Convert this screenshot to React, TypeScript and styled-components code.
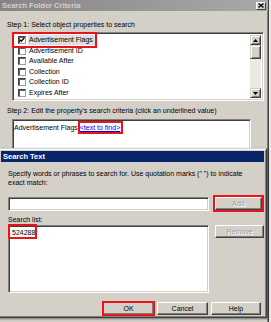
import React from 'react';
import styled, { createGlobalStyle, css } from 'styled-components';

const Global = createGlobalStyle`
  html, body { margin: 0; padding: 0; background: #ececec; }
  body { font-family: "Liberation Sans", Arial, sans-serif; }
`;

const Desktop = styled.div`
  position: relative;
  width: 271px;
  height: 322px;
  overflow: hidden;
  background: #e9e9e9;
  font-family: "Liberation Sans", Arial, sans-serif;
  font-size: 7px;
  line-height: 9px;
  color: #000;
`;

const MainWindow = styled.div`
  width: 269px;
  height: 360px;
  box-sizing: border-box;
  background: #d4d0c8;
  border-right: 1px solid #404040;
  box-shadow: inset -1px 0 0 #808080;
  display: flex;
  flex-direction: column;
`;

const TitleBar = styled.div<{ $active?: boolean; $size: number }>`
  height: 11px;
  flex: none;
  display: flex;
  align-items: center;
  justify-content: space-between;
  padding: 0 2px 0 2px;
  font-weight: bold;
  font-size: ${p => p.$size}px;
  white-space: nowrap;
  ${p =>
    p.$active
      ? css`
          background: #0a246a;
          color: #fff;
        `
      : css`
          background: linear-gradient(90deg, #858585, #a9a9a9);
          color: #d4d0c8;
        `}
`;

const CloseBtn = styled.div`
  width: 10px;
  height: 8px;
  box-sizing: border-box;
  background: #d4d0c8;
  border: 1px solid;
  border-color: #fff #404040 #404040 #fff;
  display: flex;
  align-items: center;
  justify-content: center;
`;

const Label = styled.div<{ $top: number; $left?: number }>`
  margin-top: ${p => p.$top}px;
  margin-left: ${p => p.$left ?? 7}px;
  white-space: nowrap;
  height: 9px;
`;

const Sunken = css`
  box-sizing: border-box;
  background: #fff;
  border: 1px solid;
  border-color: #808080 #fff #fff #808080;
  box-shadow: inset 1px 1px 0 #404040, inset -1px -1px 0 #d4d0c8;
`;

const PropList = styled.div`
  ${Sunken};
  margin: 3px 0 0 12px;
  width: 252px;
  height: 69px;
  display: flex;
  padding: 2px;
`;

const Rows = styled.div`
  flex: 1;
  display: flex;
  flex-direction: column;
`;

const Row = styled.div`
  height: 11px;
  display: flex;
  align-items: center;
  padding-left: 3px;
  white-space: nowrap;
`;

const Check = styled.span`
  width: 8px;
  height: 8px;
  box-sizing: border-box;
  border: 1px solid;
  border-color: #404040 #a0a0a0 #a0a0a0 #404040;
  box-shadow: inset 1px 1px 0 #606060;
  background: #fff;
  margin-right: 2px;
  display: inline-flex;
  align-items: center;
  justify-content: center;
  flex: none;
`;

const ItemText = styled.span<{ $selected?: boolean }>`
  padding: 0 2px 0 1px;
  line-height: 10px;
  background: ${p => (p.$selected ? '#dedede' : 'transparent')};
`;

const Marked = styled.span<{ $t: number; $r: number; $b: number; $l: number }>`
  position: relative;
  display: inline-flex;
  align-items: center;
  &::after {
    content: '';
    position: absolute;
    top: ${p => -p.$t}px;
    right: ${p => -p.$r}px;
    bottom: ${p => -p.$b}px;
    left: ${p => -p.$l}px;
    border: 2px solid #e8141b;
    pointer-events: none;
  }
`;

const ScrollBar = styled.div`
  width: 11px;
  display: flex;
  flex-direction: column;
  background: #ebe9e4;
`;

const ScrollBtn = styled.div<{ $grow?: boolean }>`
  height: ${p => (p.$grow ? 14 : 10)}px;
  box-sizing: border-box;
  background: #d4d0c8;
  border: 1px solid;
  border-color: #d4d0c8 #404040 #404040 #d4d0c8;
  box-shadow: inset 1px 1px 0 #fff, inset -1px -1px 0 #808080;
  display: flex;
  align-items: center;
  justify-content: center;
  flex: none;
`;

const Track = styled.div`
  flex: 1;
`;

const CriteriaBox = styled.div`
  ${Sunken};
  margin: 4px 0 0 12px;
  width: 239px;
  height: 60px;
  padding: 3px 1px;
  white-space: nowrap;
`;

const Link = styled.span`
  color: #0000ee;
  text-decoration: underline;
`;

const SearchWindow = styled.div`
  position: absolute;
  left: -2px;
  top: 148px;
  width: 269px;
  height: 170px;
  box-sizing: border-box;
  background: #d4d0c8;
  border: 1px solid;
  border-color: #d4d0c8 #404040 #404040 #d4d0c8;
  box-shadow: inset 1px 1px 0 #fff, inset -1px -1px 0 #808080, 1px 1px 2px rgba(0, 0, 0, 0.45);
  padding: 2px;
  display: flex;
  flex-direction: column;
`;

const Body = styled.div`
  padding: 0 0 0 7px;
  display: flex;
  flex-direction: column;
  flex: 1;
`;

const Paragraph = styled.div`
  margin-top: 7px;
  line-height: 9px;
`;

const FieldRow = styled.div<{ $top: number }>`
  display: flex;
  align-items: flex-start;
  gap: 6px;
  margin-top: ${p => p.$top}px;
`;

const TextInput = styled.div`
  ${Sunken};
  width: 201px;
  height: 14px;
`;

const ListBox = styled.div`
  ${Sunken};
  width: 202px;
  height: 68px;
  padding: 2px 3px;
`;

const Button = styled.button<{ $w: number; $disabled?: boolean }>`
  width: ${p => p.$w}px;
  height: 13px;
  box-sizing: border-box;
  padding: 0;
  margin: 0;
  background: #d4d0c8;
  border: 1px solid;
  border-color: #fff #404040 #404040 #fff;
  box-shadow: inset -1px -1px 0 #808080;
  font-family: "Liberation Sans", Arial, sans-serif;
  font-size: 7px;
  line-height: 9px;
  color: ${p => (p.$disabled ? '#a09c94' : '#000')};
  text-shadow: ${p => (p.$disabled ? '1px 1px 0 #fff' : 'none')};
  display: flex;
  align-items: center;
  justify-content: center;
`;

const ButtonMark = styled(Marked)`
  display: inline-flex;
`;

const Footer = styled.div`
  display: flex;
  justify-content: flex-end;
  gap: 3px;
  margin-top: 9px;
  padding-right: 3px;
`;

const items = [
  'Advertisement Flags',
  'Advertisement ID',
  'Available After',
  'Collection',
  'Collection ID',
  'Expires After',
];

const Tick = () => (
  <svg width="6" height="6" viewBox="0 0 7 7">
    <path d="M0.8 3.2 L2.6 5 L6.2 1.2" stroke="#000" strokeWidth="1.5" fill="none" />
  </svg>
);

const Arrow = ({ up }: { up?: boolean }) => (
  <svg width="5" height="3" viewBox="0 0 5 3">
    <path d={up ? 'M2.5 0 L5 3 L0 3 Z' : 'M0 0 L5 0 L2.5 3 Z'} fill="#000" />
  </svg>
);

export default function App() {
  return (
    <>
      <Global />
      <Desktop>
        <MainWindow>
          <TitleBar $size={7.5}>
            <span>Search Folder Criteria</span>
            <CloseBtn>
              <svg width="6" height="5" viewBox="0 0 6 5">
                <path d="M0.5 0.5 L5.5 4.5 M5.5 0.5 L0.5 4.5" stroke="#000" strokeWidth="1.3" />
              </svg>
            </CloseBtn>
          </TitleBar>
          <Label $top={9}>Step 1: Select object properties to search</Label>
          <PropList>
            <Rows>
              {items.map((it, i) =>
                i === 0 ? (
                  <Row key={it}>
                    <Marked $t={3} $r={2} $b={3} $l={6}>
                      <Check>
                        <Tick />
                      </Check>
                      <ItemText $selected>{it}</ItemText>
                    </Marked>
                  </Row>
                ) : (
                  <Row key={it}>
                    <Check />
                    <ItemText>{it}</ItemText>
                  </Row>
                )
              )}
            </Rows>
            <ScrollBar>
              <ScrollBtn>
                <Arrow up />
              </ScrollBtn>
              <ScrollBtn $grow />
              <Track />
              <ScrollBtn>
                <Arrow />
              </ScrollBtn>
            </ScrollBar>
          </PropList>
          <Label $top={5}>Step 2: Edit the property's search criteria (click an underlined value)</Label>
          <CriteriaBox>
            Advertisement Flags{' '}
            <Marked $t={2} $r={3} $b={2} $l={2}>
              <Link>&lt;text to find&gt;</Link>
            </Marked>
          </CriteriaBox>
        </MainWindow>

        <SearchWindow>
          <TitleBar $active $size={7.5}>
            <span>Search Text</span>
          </TitleBar>
          <Body>
            <Paragraph>
              Specify words or phrases to search for. Use quotation marks (" ") to indicate
              <br />
              exact match:
            </Paragraph>
            <FieldRow $top={10}>
              <TextInput />
              <ButtonMark $t={2} $r={2} $b={2} $l={2}>
                <Button $w={47} $disabled>
                  Add
                </Button>
              </ButtonMark>
            </FieldRow>
            <Label $top={4} $left={0}>
              Search list:
            </Label>
            <FieldRow $top={1}>
              <ListBox>
                <Marked $t={4} $r={2} $b={2} $l={4}>
                  524288
                </Marked>
              </ListBox>
              <Button $w={49} $disabled>
                Remove
              </Button>
            </FieldRow>
            <Footer>
              <ButtonMark $t={1} $r={1} $b={1} $l={1}>
                <Button $w={51}>OK</Button>
              </ButtonMark>
              <Button $w={51}>Cancel</Button>
              <Button $w={50}>Help</Button>
            </Footer>
          </Body>
        </SearchWindow>
      </Desktop>
    </>
  );
}
